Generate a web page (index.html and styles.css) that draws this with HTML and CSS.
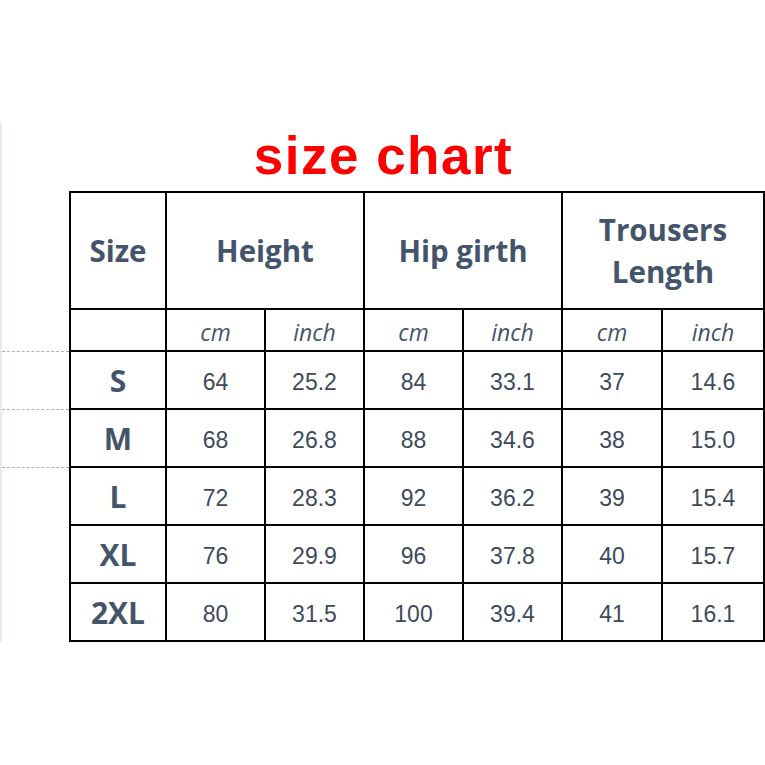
FILE: index.html
```html
<!DOCTYPE html>
<html>
<head>
<meta charset="utf-8">
<link rel="stylesheet" href="styles.css">
</head>
<body>
<div class="sheet">
  <h1 class="title">size chart</h1>
  <div class="area">
    <div class="gutter">
      <div class="gap-top"></div>
      <div class="rule"></div>
      <div class="rule"></div>
      <div class="rule"></div>
    </div>
    <div class="chart">
      <div class="cell head">Size</div>
      <div class="cell head span2">Height</div>
      <div class="cell head span2">Hip girth</div>
      <div class="cell head span2">Trousers<br>Length</div>

      <div class="cell unit"></div>
      <div class="cell unit">cm</div><div class="cell unit">inch</div>
      <div class="cell unit">cm</div><div class="cell unit">inch</div>
      <div class="cell unit">cm</div><div class="cell unit">inch</div>

      <div class="cell size">S</div>
      <div class="cell num">64</div><div class="cell num">25.2</div>
      <div class="cell num">84</div><div class="cell num">33.1</div>
      <div class="cell num">37</div><div class="cell num">14.6</div>

      <div class="cell size">M</div>
      <div class="cell num">68</div><div class="cell num">26.8</div>
      <div class="cell num">88</div><div class="cell num">34.6</div>
      <div class="cell num">38</div><div class="cell num">15.0</div>

      <div class="cell size">L</div>
      <div class="cell num">72</div><div class="cell num">28.3</div>
      <div class="cell num">92</div><div class="cell num">36.2</div>
      <div class="cell num">39</div><div class="cell num">15.4</div>

      <div class="cell size">XL</div>
      <div class="cell num">76</div><div class="cell num">29.9</div>
      <div class="cell num">96</div><div class="cell num">37.8</div>
      <div class="cell num">40</div><div class="cell num">15.7</div>

      <div class="cell size">2XL</div>
      <div class="cell num">80</div><div class="cell num">31.5</div>
      <div class="cell num">100</div><div class="cell num">39.4</div>
      <div class="cell num">41</div><div class="cell num">16.1</div>
    </div>
  </div>
</div>
</body>
</html>
```

FILE: styles.css
```css
html, body {
  margin: 0;
  padding: 0;
  background: #ffffff;
}

body {
  width: 765px;
  height: 765px;
  overflow: hidden;
  padding-top: 123px;
  box-sizing: border-box;
}

.sheet {
  border-left: 2px solid #e3edef;
  width: 763px;
}

.title {
  margin: 0;
  height: 68px;
  line-height: 66px;
  text-align: center;
  font-family: "Liberation Sans", Arial, sans-serif;
  font-weight: bold;
  font-size: 53px;
  letter-spacing: 1.5px;
  color: #ff0000;
}

.area {
  display: flex;
}

.gutter {
  width: 67px;
  display: flex;
  flex-direction: column;
}

.gap-top {
  height: 160px;
}

.rule {
  height: 57px;
  border-top: 1px dashed #a9b4bb;
}

.chart {
  display: grid;
  grid-template-columns: 94px 97px 97px 97px 97px 98px 100px;
  grid-template-rows: 115px 40px 56px 56px 56px 56px 56px;
  gap: 2px;
  padding: 2px;
  background: #000000;
}

.cell {
  background: #ffffff;
  display: flex;
  align-items: center;
  justify-content: center;
  text-align: center;
}

.span2 {
  grid-column: span 2;
}

.head {
  font-family: "Open Sans", "Noto Sans", sans-serif;
  font-weight: 700;
  font-size: 29.5px;
  line-height: 42px;
  color: #44546a;
}

.unit {
  font-family: "Open Sans", "Noto Sans", sans-serif;
  font-style: italic;
  font-size: 23px;
  padding-top: 3px;
  color: #44546a;
}

.size {
  font-family: "Open Sans", "Noto Sans", sans-serif;
  font-weight: 700;
  font-size: 30px;
  color: #44546a;
}

.num {
  font-family: "Liberation Sans", Arial, sans-serif;
  font-size: 23px;
  padding-top: 4px;
  color: #3e4a5c;
}
```
